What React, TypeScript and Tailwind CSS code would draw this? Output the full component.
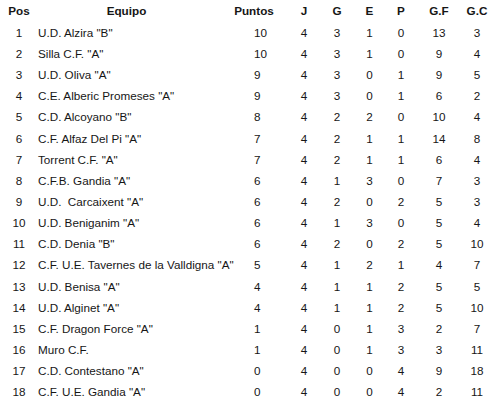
import React from "react";

const rows: [number, string, number, number, number, number, number, number, number][] = [
  [1, 'U.D. Alzira "B"', 10, 4, 3, 1, 0, 13, 3],
  [2, 'Silla C.F. "A"', 10, 4, 3, 1, 0, 9, 4],
  [3, 'U.D. Oliva "A"', 9, 4, 3, 0, 1, 9, 5],
  [4, 'C.E. Alberic Promeses "A"', 9, 4, 3, 0, 1, 6, 2],
  [5, 'C.D. Alcoyano "B"', 8, 4, 2, 2, 0, 10, 4],
  [6, 'C.F. Alfaz Del Pi "A"', 7, 4, 2, 1, 1, 14, 8],
  [7, 'Torrent C.F. "A"', 7, 4, 2, 1, 1, 6, 4],
  [8, 'C.F.B. Gandia "A"', 6, 4, 1, 3, 0, 7, 3],
  [9, 'U.D.\u00a0 Carcaixent "A"', 6, 4, 2, 0, 2, 5, 3],
  [10, 'U.D. Beniganim "A"', 6, 4, 1, 3, 0, 5, 4],
  [11, 'C.D. Denia "B"', 6, 4, 2, 0, 2, 5, 10],
  [12, 'C.F. U.E. Tavernes de la Valldigna "A"', 5, 4, 1, 2, 1, 4, 7],
  [13, 'U.D. Benisa "A"', 4, 4, 1, 1, 2, 5, 5],
  [14, 'U.D. Alginet "A"', 4, 4, 1, 1, 2, 5, 10],
  [15, 'C.F. Dragon Force "A"', 1, 4, 0, 1, 3, 2, 7],
  [16, "Muro C.F.", 1, 4, 0, 1, 3, 3, 11],
  [17, 'C.D. Contestano "A"', 0, 4, 0, 0, 4, 9, 18],
  [18, 'C.F. U.E. Gandia "A"', 0, 4, 0, 0, 4, 2, 11],
];

const grid =
  "grid grid-cols-[38px_177px_78px_22px_44px_21px_42px_34px_42px] items-center";

export default function App() {
  return (
    <div
      className="w-[500px] h-[410px] bg-white text-[#161616] text-[11.7px] leading-none overflow-hidden"
      style={{ fontFamily: '"Liberation Sans", Arial, sans-serif' }}
    >
      <div className={`${grid} h-[22px] font-bold`}>
        <div className="text-center">Pos</div>
        <div className="text-center">Equipo</div>
        <div className="text-center">Puntos</div>
        <div className="text-center">J</div>
        <div className="text-center">G</div>
        <div className="text-center">E</div>
        <div className="text-center">P</div>
        <div className="text-center">G.F</div>
        <div className="text-center">G.C</div>
      </div>
      {rows.map((r) => (
        <div key={r[0]} className={`${grid} h-[21.17px]`}>
          <div className="text-center">{r[0]}</div>
          <div className="whitespace-pre">{r[1]}</div>
          <div className="pl-[39px]">{r[2]}</div>
          <div className="text-center">{r[3]}</div>
          <div className="text-center">{r[4]}</div>
          <div className="text-center">{r[5]}</div>
          <div className="text-center">{r[6]}</div>
          <div className="text-center">{r[7]}</div>
          <div className="text-center">{r[8]}</div>
        </div>
      ))}
    </div>
  );
}
